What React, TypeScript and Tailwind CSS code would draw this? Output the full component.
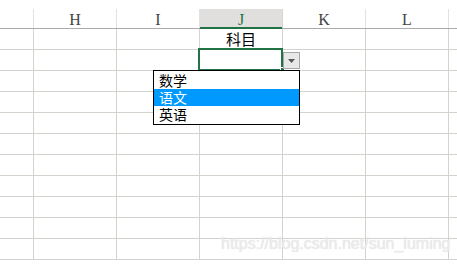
import React from "react";

const cols = ["H", "I", "J", "K", "L"];
const ROWS = 11;

const options = ["数学", "语文", "英语"];

function HeaderRow() {
  return (
    <div className="flex h-[20px] border-b border-[#ababab]">
      <div className="w-[34px] shrink-0 border-r border-[#e1e1e1]" />
      {cols.map((c) =>
        c === "J" ? (
          <div
            key={c}
            className="relative w-[83px] shrink-0 border-r border-[#d4d4d4] bg-[#e1dfdd] flex justify-center pt-[3px] text-[16px] leading-[16px] text-[#217346] font-[family-name:'Liberation_Serif',serif]"
          >
            {c}
            <div className="absolute left-0 right-0 -bottom-[1px] h-[2px] bg-[#217346]" />
          </div>
        ) : (
          <div
            key={c}
            className="w-[83px] shrink-0 border-r border-[#e1e1e1] flex justify-center pt-[3px] text-[16px] leading-[16px] text-[#444444] font-[family-name:'Liberation_Serif',serif]"
          >
            {c}
          </div>
        )
      )}
      <div className="flex-1" />
    </div>
  );
}

function Cell({ row, col }: { row: number; col: string }) {
  const isTitle = row === 0 && col === "J";
  const isSelected = row === 1 && col === "J";
  return (
    <div className="relative w-[83px] shrink-0 border-r border-[#d5d3ce] flex items-center justify-center">
      {isTitle && (
        <span className="text-[15px] leading-[16px] text-black font-[family-name:'Noto_Sans_CJK_SC',sans-serif]">
          科目
        </span>
      )}
      {isSelected && (
        <>
          <div className="absolute -left-[2px] -top-[2px] w-[85px] h-[23px] border-2 border-[#217346]" />
          <div className="absolute left-[80px] top-[17px] w-[5px] h-[5px] bg-[#217346] border border-white" />
          <div className="absolute left-[83px] top-[2px] w-[17px] h-[17px] border border-[#a6a6a6] bg-[#e8e8e8] flex items-center justify-center">
            <svg width="7" height="4" viewBox="0 0 7 4">
              <path d="M0 0h7L3.5 4z" fill="#595959" />
            </svg>
          </div>
        </>
      )}
    </div>
  );
}

export default function App() {
  return (
    <div className="relative w-[457px] h-[264px] overflow-hidden bg-white font-[family-name:'Liberation_Sans',sans-serif]">
      <div className="pt-[9px]">
        <HeaderRow />
        {Array.from({ length: ROWS }).map((_, r) => (
          <div key={r} className="flex h-[21px] border-b border-[#d5d3ce]">
            <div className="w-[34px] shrink-0 border-r border-[#d5d3ce]" />
            {cols.map((c) => (
              <Cell key={c} row={r} col={c} />
            ))}
            <div className="flex-1" />
          </div>
        ))}
      </div>

      {/* validation dropdown */}
      <div className="absolute left-[153px] top-[70px] w-[147px] border border-black bg-white py-[1px] font-[family-name:'Noto_Sans_CJK_SC',sans-serif]">
        {options.map((o, i) => (
          <div
            key={o}
            className={
              "h-[17px] pl-[5px] text-[14px] leading-[17px] " +
              (i === 1 ? "bg-[#0099ff] text-white" : "text-black")
            }
          >
            {o}
          </div>
        ))}
      </div>

      <div className="absolute left-[221px] top-[235px] text-[16px] leading-[18px] text-[#ececec] [text-shadow:0_0_1px_#d8d8d8] whitespace-nowrap">
        https://blog.csdn.net/sun_luming
      </div>
    </div>
  );
}
